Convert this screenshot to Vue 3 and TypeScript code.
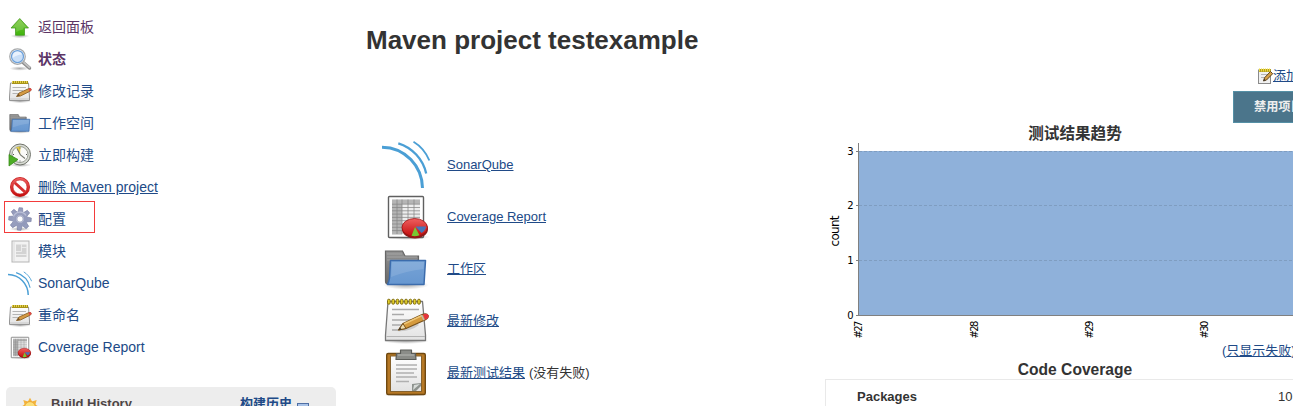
<script setup lang="ts">
interface Task { label: string; icon: string; visited?: boolean; current?: boolean; underlined?: boolean; marked?: boolean }
interface Shortcut { label: string; icon: string; note?: string }

const tasks: Task[] = [
  { label: '返回面板', icon: 'up', visited: true },
  { label: '状态', icon: 'search', visited: true, current: true },
  { label: '修改记录', icon: 'notepad-small' },
  { label: '工作空间', icon: 'folder' },
  { label: '立即构建', icon: 'clock' },
  { label: '删除 Maven project', icon: 'stop', underlined: true },
  { label: '配置', icon: 'gear', marked: true },
  { label: '模块', icon: 'module' },
  { label: 'SonarQube', icon: 'sonar' },
  { label: '重命名', icon: 'notepad-small' },
  { label: 'Coverage Report', icon: 'report' },
]

const shortcuts: Shortcut[] = [
  { label: 'SonarQube', icon: 'sonar' },
  { label: 'Coverage Report', icon: 'report' },
  { label: '工作区', icon: 'folder' },
  { label: '最新修改', icon: 'notepad' },
  { label: '最新测试结果', icon: 'clipboard', note: '(没有失败)' },
]

const yTicks = [
  { value: 3, y: 8.5 },
  { value: 2, y: 62.5 },
  { value: 1, y: 117.5 },
  { value: 0, y: 172 },
]
const xTicks = [
  { label: '#27', x: 33 },
  { label: '#28', x: 149 },
  { label: '#29', x: 264 },
  { label: '#30', x: 379 },
]
const teeth = [0, 45, 90, 135, 180, 225, 270, 315]
const rings = [5.5, 9.8, 14.1, 18.4, 22.7, 27, 31.3, 35.6]
</script>

<template>
  <svg class="sprite" aria-hidden="true">
    <defs>
      <linearGradient id="green" x1="0" y1="0" x2="0" y2="1"><stop offset="0" stop-color="#7cc63c" /><stop offset="1" stop-color="#3fb50c" /></linearGradient>
      <linearGradient id="blue" x1="0" y1="0" x2="0" y2="1"><stop offset="0" stop-color="#76a3d6" /><stop offset="1" stop-color="#6797d0" /></linearGradient>
      <linearGradient id="grey" x1="0" y1="0" x2="0" y2="1"><stop offset="0" stop-color="#929292" /><stop offset="1" stop-color="#686868" /></linearGradient>
      <linearGradient id="paper" x1="0" y1="0" x2="0" y2="1"><stop offset="0" stop-color="#ffffff" /><stop offset="1" stop-color="#e2e2e2" /></linearGradient>
      <linearGradient id="red" x1="0" y1="0" x2="0" y2="1"><stop offset="0" stop-color="#ee6060" /><stop offset="1" stop-color="#c40c0c" /></linearGradient>
      <linearGradient id="steel" x1="0" y1="0" x2="1" y2="1"><stop offset="0" stop-color="#9ea5c2" /><stop offset="1" stop-color="#8e96b8" /></linearGradient>
      <radialGradient id="shadow"><stop offset="0" stop-color="#000" stop-opacity=".32" /><stop offset="1" stop-color="#000" stop-opacity="0" /></radialGradient>
    </defs>

    <symbol id="up" viewBox="0 0 48 48">
      <ellipse cx="24" cy="42" rx="19" ry="4.500" fill="url(#shadow)" />
      <path d="M23.500 7 L41 26 H33 V40.500 H15 V26 H6 Z" fill="url(#green)" stroke="#449a22" stroke-width="1.500" stroke-linejoin="round" />
      <path d="M23.500 9 L38 25 H31 L30 29 Q22 30 16.500 34 V25 H9 Z" fill="#fff" opacity=".16" />
    </symbol>

    <symbol id="search" viewBox="0 0 48 48">
      <ellipse cx="23" cy="43" rx="20" ry="4.500" fill="url(#shadow)" />
      <path d="M29 30 L43 42" stroke="#8a8a8a" stroke-width="7" stroke-linecap="round" />
      <path d="M30 29.500 L43 41" stroke="#c1c1c1" stroke-width="3.500" stroke-linecap="round" />
      <circle cx="19" cy="19" r="15.500" fill="#fff" stroke="#a6a8aa" stroke-width="2.500" />
      <circle cx="19" cy="19" r="12" fill="#cadff7" stroke="#6a9fd9" stroke-width="2.500" />
      <path d="M9 19 Q10 9 19 9 Q26 9 28 15 Q18 15 9 22Z" fill="#f0f6fe" opacity=".8" />
    </symbol>

    <symbol id="notepad" viewBox="0 0 48 48">
      <ellipse cx="24" cy="45" rx="23" ry="3" fill="url(#shadow)" />
      <path d="M6 5.500 H40.500 L43.500 39 V44.500 H3.500 V39 Z" fill="url(#paper)" stroke="#777" stroke-width="1.300" stroke-linejoin="round" />
      <path d="M4.500 40.500 H43" stroke="#b4b4b4" />
      <path d="M10 13.500 H37 M10 18.500 H22 M10 24 H29 M10 29 H24 M10 34 H16" stroke="#aaa" stroke-width="1.500" />
      <g v-for="r in rings" :key="r"><rect :x="r" y="3.200" width="2.700" height="5" rx="1.300" fill="#e3cf27" stroke="#826f13" stroke-width="1" /></g>
      <path d="M15 35 Q28 36 37 29 L33 26Z" fill="#888" opacity=".35" />
      <path d="M16.500 34 L21 27.500 L40 18.500 Q45 17 46 19.500 Q47 22 43 24 L24 32.500 Z" fill="#d59a3d" stroke="#795119" stroke-width="1.200" stroke-linejoin="round" />
      <path d="M22 28 L40 19.500" stroke="#efc777" stroke-width="1.500" />
      <path d="M16.500 34 L21 27.500 L24 32.500Z" fill="#eddcae" stroke="#795119" />
      <path d="M16.500 34 L18 31.500 L19.500 33.200Z" fill="#333" />
      <path d="M41 18.400 L43 23.800 Q47.500 22 46.500 19.200 Q45 16.800 41 18.400Z" fill="#e5343e" />
      <path d="M39.500 19 L42 24.200" stroke="#bbb" stroke-width="1.300" />
    </symbol>

    <symbol id="notepad-small" viewBox="0 0 24 24">
      <ellipse cx="12" cy="22.500" rx="11.500" ry="1.500" fill="url(#shadow)" />
      <path d="M2.500 4 H20.500 L21.500 18 V21.500 H1.500 V18Z" fill="url(#paper)" stroke="#959595" stroke-width="1" stroke-linejoin="round" />
      <path d="M2 20 H21" stroke="#c8c8c8" />
      <path d="M4.500 8.500 H18 M4.500 11.500 H15 M4.500 14.500 H11" stroke="#b5b5b5" />
      <path d="M4 3.500 H20" stroke="#a6921b" stroke-width="3" />
      <path d="M4 3 H20" stroke="#e6d24a" stroke-width="2" stroke-dasharray="1 1" />
      <path d="M8.500 17.500 L11 14 L21 9.500 Q23 9 23.200 10.500 Q23.200 12 21.500 12.500 L12.500 17Z" fill="#d49a43" stroke="#82581e" stroke-width=".8" />
      <path d="M8.500 17.500 L10.500 14.800 L12 16.800Z" fill="#765226" />
      <path d="M20.500 9.500 L21.500 12.500 L23.500 11 L23 9.200Z" fill="#e44549" />
    </symbol>

    <symbol id="notepad-tiny" viewBox="0 0 16 16">
      <rect x=".5" y="2" width="12" height="13.500" fill="#f1f1f1" stroke="#8b8b8b" />
      <path d="M3 6.500 H10 M3 9.500 H7" stroke="#b5b5b5" />
      <path d="M1 2.500 H13" stroke="#b39e22" stroke-width="3" />
      <path d="M1 2 H13" stroke="#f0dd3f" stroke-width="3" stroke-dasharray="1 1" />
      <path d="M5.500 13 L6.500 9.800 L12.500 3.500 L14.700 5.700 L8.500 12Z" fill="#d6a049" stroke="#5f421c" stroke-width="1" stroke-linejoin="round" />
      <path d="M5.500 13 L6.200 10.800 L7.500 12.200Z" fill="#333" />
    </symbol>

    <symbol id="folder" viewBox="0 0 48 48">
      <ellipse cx="24" cy="41" rx="23" ry="4.500" fill="url(#shadow)" />
      <path d="M3.500 7 H20.500 L23 12 H36.500 V24 L36 40 H5.500 Q3.500 40 3.500 37Z" fill="url(#grey)" stroke="#666" stroke-width="1.200" />
      <path d="M5 10 H20 M5 13 H35 M5 16 H35" stroke="#b0b0b0" stroke-width=".7" />
      <path d="M8.500 16.500 H43.500 L42 40.500 H5.500 Q7 38 7.500 34Z" fill="url(#blue)" stroke="#3c6cac" stroke-width="1.500" stroke-linejoin="round" />
      <path d="M10 18 H42 L41.500 25 Q24 27 9 33Z" fill="#fff" opacity=".12" />
    </symbol>

    <symbol id="clock" viewBox="0 0 48 48">
      <ellipse cx="25" cy="44" rx="22" ry="4" fill="url(#shadow)" />
      <circle cx="24" cy="23" r="21" fill="#d8dbd3" stroke="#71746c" stroke-width="2" />
      <circle cx="24" cy="23" r="16" fill="#fafaf8" stroke="#979b92" stroke-width="2" />
      <path d="M24 23 L16 9 Q20 7 25 7 Z" fill="#e3cc44" />
      <path d="M18 11 L25 24 L34 31" fill="none" stroke="#777970" stroke-width="2.200" />
      <path d="M24 9 V11 M24 35 V37 M38 23 H36 M10 23 H12" stroke="#555" stroke-width="2" />
      <path d="M2 23 L20 33 L2 46Z" fill="#4dad25" stroke="#368817" stroke-width="1.500" stroke-linejoin="round" />
    </symbol>

    <symbol id="stop" viewBox="0 0 48 48">
      <ellipse cx="24" cy="44" rx="20" ry="4" fill="url(#shadow)" />
      <circle cx="24" cy="24" r="20" fill="#c72020" />
      <circle cx="24" cy="24" r="18.600" fill="url(#red)" />
      <circle cx="24" cy="24" r="14" fill="#fff" stroke="#c72020" stroke-width="1.200" />
      <path d="M13.500 15.500 L34 34" stroke="#d63030" stroke-width="6" />
    </symbol>

    <symbol id="gear" viewBox="0 0 48 48">
      <ellipse cx="24" cy="44" rx="21" ry="4" fill="url(#shadow)" />
      <g v-for="a in teeth" :key="a" :transform="`rotate(${a + 4} 24 24)`"><path d="M19 11 L20.500 1.500 H27.500 L29 11Z" fill="#969dbd" stroke="#777da2" stroke-width="1.200" /></g>
      <circle cx="24" cy="24" r="15.500" fill="url(#steel)" />
      <path d="M11 19 A14 14 0 0 1 36 17" fill="none" stroke="#bcc1d8" stroke-width="2.500" />
      <circle cx="24" cy="24" r="8.500" fill="#b9bfd7" stroke="#8b91b3" />
      <circle cx="24" cy="24" r="6" fill="#fff" stroke="#858baa" />
    </symbol>

    <symbol id="module" viewBox="0 0 48 48">
      <rect x="8" y="4" width="34" height="42" fill="#f3f3f3" stroke="#b5b5b5" stroke-width="2" />
      <path d="M12 5 V45" stroke="#d5d5d5" stroke-width="1.500" />
      <rect x="16" y="11" width="21" height="25" fill="#d3d3d3" />
      <path d="M16 25 H27 M27 11 V25 M27 17 H37 M16 31 H37" stroke="#f4f4f4" stroke-width="1.500" />
    </symbol>

    <symbol id="sonar" viewBox="0 0 48 48">
      <g fill="none" stroke="#4b9fd5">
        <path d="M0 7.200 C23 7.400 40.500 26 40.500 49" stroke-width="3" />
        <path d="M16.300 3.300 C30 7.500 41 19 44.200 33.500" stroke-width="2.300" />
        <path d="M31.500 1.800 C38.500 6 44 12.500 47.300 20.500" stroke-width="1.800" />
      </g>
    </symbol>

    <symbol id="report" viewBox="0 0 48 48">
      <ellipse cx="26" cy="45" rx="22" ry="3" fill="url(#shadow)" />
      <rect x="6.500" y="4.500" width="35" height="41" rx="1" fill="#fff" stroke="#606060" stroke-width="1.400" />
      <rect x="10" y="7.500" width="28" height="35" fill="#ededed" />
      <path d="M10 7.500 H38 V12 H20 V42.500 H10Z" fill="#b5b5b5" />
      <path d="M10 12.200 H38 M10 15.500 H38 M10 18.800 H38 M10 22.100 H38 M10 25.400 H38 M10 28.700 H38 M10 32 H38 M10 35.300 H38 M10 38.600 H38 M15 7.500 V42 M20 7.500 V42 M26 7.500 V42 M32 7.500 V42" stroke="#858585" stroke-width=".75" />
      <ellipse cx="33" cy="37" rx="13" ry="9.500" fill="#8d1919" />
      <ellipse cx="32.700" cy="35.500" rx="12.700" ry="9" fill="url(#red)" stroke="#9f1010" stroke-width=".8" />
      <path d="M34 35 V34.500 L44 34.500 Q43.500 38.500 39.500 41Z" fill="#4576b9" />
      <path d="M33 35 L37.500 43.300 Q33 45 29.500 43.800Z" fill="#78c832" />
    </symbol>

    <symbol id="clipboard" viewBox="0 0 48 48">
      <ellipse cx="24" cy="47" rx="22" ry="2.500" fill="url(#shadow)" />
      <rect x="4.700" y="5.500" width="38.600" height="41" rx="1.500" fill="#b67825" stroke="#704911" stroke-width="1.400" />
      <rect x="8.500" y="8" width="31" height="35.500" fill="url(#paper)" stroke="#86622d" />
      <path d="M14 17 H35 M14 21 H35 M14 25 H32 M14 29 H35 M14 33.500 H27" stroke="#b0b0b0" stroke-width="1.400" />
      <path d="M30 43 V36 L39 35 L39 38 L34 43Z" fill="#8d928e" /><path d="M31 42 L32 37 L38 36Z" fill="#d8dcd9" />
      <path d="M14.500 5.500 H18.500 V2 H29.500 V5.500 H33.500 L34 11.500 H14Z" fill="#8a8c88" stroke="#5a5c58" stroke-width="1.200" stroke-linejoin="round" />
      <path d="M16 7 H32" stroke="#b5b7b3" />
    </symbol>

    <symbol id="sun" viewBox="0 0 24 24">
      <path d="M12 1 L14.500 5.500 L20 3.500 L18.500 9 L23 12 L18.500 15 L20 20 L14.500 18.500 L12 23 L9.500 18.500 L4 20 L5.500 15 L1 12 L5.500 9 L4 3.500 L9.500 5.500Z" fill="#f4b33c" />
      <circle cx="12" cy="12" r="6.500" fill="#fbdf79" stroke="#eda52e" stroke-width="1.200" />
    </symbol>
  </svg>

  <div class="page">
    <aside class="side">
      <nav class="tasks">
        <a v-for="t in tasks" :key="t.label" class="task" :class="{ visited: t.visited, current: t.current, underlined: t.underlined, marked: t.marked }">
          <svg class="icon-md"><use :href="'#' + t.icon" /></svg>
          <span>{{ t.label }}</span>
        </a>
      </nav>
      <section class="history">
        <svg class="sun"><use href="#sun" /></svg>
        <span class="history-title">Build History</span>
        <a class="trend">构建历史</a>
        <svg class="collapse" viewBox="0 0 12 12"><rect x=".5" y=".5" width="11" height="11" fill="#fff" stroke="#4f6fa5" /><rect x="1" y="1" width="10" height="2.500" fill="#a9c3e8" /></svg>
      </section>
    </aside>

    <main class="main">
      <section class="overview">
        <h1>Maven project testexample</h1>
        <div class="shortcuts">
          <div v-for="s in shortcuts" :key="s.label" class="shortcut">
            <svg class="icon-xl"><use :href="'#' + s.icon" /></svg>
            <span class="shortcut-text"><a>{{ s.label }}</a><span v-if="s.note" class="note">{{ s.note }}</span></span>
          </div>
        </div>
      </section>

      <section class="reports">
        <div class="describe">
          <svg class="icon-sm"><use href="#notepad-tiny" /></svg><a>添加说明</a>
        </div>
        <button class="disable">禁用项目</button>
        <h2 class="trend-title">测试结果趋势</h2>
        <svg class="chart" viewBox="0 0 500 200">
          <rect x="34" y="8" width="466" height="164" fill="#8fb1da" />
          <path v-for="t in yTicks.slice(0, 3)" :key="t.value" :d="`M34 ${t.y} H500`" class="grid" />
          <path d="M33.500 0 V172.500 H500" class="axis" />
          <g v-for="t in yTicks" :key="t.value">
            <path :d="`M31 ${Math.floor(t.y) + .5} H34`" class="axis" />
            <text x="28.500" :y="t.y + 3.500" class="tick" text-anchor="end">{{ t.value }}</text>
          </g>
          <text v-for="t in xTicks" :key="t.label" class="tick" text-anchor="end" textLength="18" :transform="`translate(${t.x + 4} 177.500) rotate(-90)`">{{ t.label }}</text>
          <text class="axis-name" text-anchor="middle" textLength="31" transform="translate(14 88) rotate(-90)">count</text>
        </svg>
        <div class="filter"><a>(<u>只显示失败</u>)</a></div>
        <h2 class="coverage-title">Code Coverage</h2>
        <div class="coverage"><b>Packages</b><span class="value">10</span></div>
      </section>
    </main>
  </div>
</template>

<style>
html, body { overflow: hidden; background: #fff; }
</style>

<style scoped>
.sprite { position: absolute; width: 0; height: 0; }
.page {
  display: flex;
  width: 1325px;
  height: 406px;
  overflow: hidden;
  color: #333;
  background: #fff;
  font: 13px/20px "Liberation Sans", "Noto Sans CJK SC", sans-serif;
}
.side { flex: none; width: 336px; padding-top: 11px; box-sizing: border-box; }
.tasks { height: 376px; }
.task { display: flex; align-items: center; gap: 6px; height: 32px; padding-left: 8px; position: relative; color: #204a87; font-size: 14px; white-space: nowrap; }
.visited { color: #5c3566; }
.current { font-weight: bold; }
.underlined { text-decoration: underline; }
.marked::after { content: ""; position: absolute; left: 4px; top: -2px; width: 89px; height: 30px; border: 1px solid #f33b3b; }
.icon-md { width: 24px; height: 24px; flex: none; }
.icon-sm { width: 16px; height: 16px; flex: none; }
.icon-xl { width: 48px; height: 48px; flex: none; overflow: visible; }
.history { display: flex; align-items: center; height: 33px; margin-left: 6px; padding-left: 14px; border-radius: 5px 5px 0 0; background: #ededed; font-weight: bold; }
.sun { width: 20px; height: 20px; margin: 6px 11px 0 0; }
.history-title { width: 189px; color: #4d4545; }
.trend { color: #204a87; }
.collapse { width: 12px; height: 12px; margin: 10px 0 0 5px; }
.main { display: flex; flex: 1; min-width: 0; }
.overview { flex: none; width: 489px; padding: 23px 0 0 30px; box-sizing: border-box; }
h1 { margin: 0; height: 34px; color: #333; font-size: 26px; line-height: 34px; white-space: nowrap; }
.shortcuts { display: flex; flex-direction: column; gap: 4px; padding: 83px 0 0 16px; }
.shortcut { display: flex; align-items: center; gap: 17px; height: 48px; }
.shortcut-text { padding-top: 2px; }
.note { margin-left: 4px; }
a { color: #204a87; }
.shortcut a, .describe a { text-decoration: underline; }
.reports { display: flex; flex-direction: column; flex: none; width: 500px; padding-top: 66px; box-sizing: border-box; }
.reports > * { flex: none; }
.describe { display: flex; justify-content: flex-end; align-items: center; height: 20px; }
.describe svg { margin: 0 -1px 0 0; }
.disable { align-self: flex-end; width: 92px; height: 32px; margin-top: 5px; padding: 0 0 0 20px; border: 1px solid #5590a6; background: #4b758b; color: #eee; text-align: left; font: bold 12.200px/28px "Liberation Sans", "Noto Sans CJK SC", sans-serif; }
h2 { margin: 0; color: #333; font-size: 15.600px; line-height: 22px; text-align: center; }
.trend-title { height: 20px; }
.chart { display: block; width: 500px; height: 200px; }
.grid { stroke: #7f9dc0; stroke-dasharray: 3 2; }
.axis { fill: none; stroke: #808080; }
.tick { font: 10px "DejaVu Sans", sans-serif; fill: #000; }
.axis-name { font: 12px "DejaVu Sans", sans-serif; fill: #000; }
.filter { height: 16px; line-height: 16px; padding-left: 397px; white-space: nowrap; }
.coverage-title { height: 20px; }
.coverage { display: flex; justify-content: space-between; height: 34px; line-height: 34px; padding: 0 13px 0 31px; border: 1px solid #e9e9e9; box-sizing: border-box; }
.value { width: 33px; }
</style>
